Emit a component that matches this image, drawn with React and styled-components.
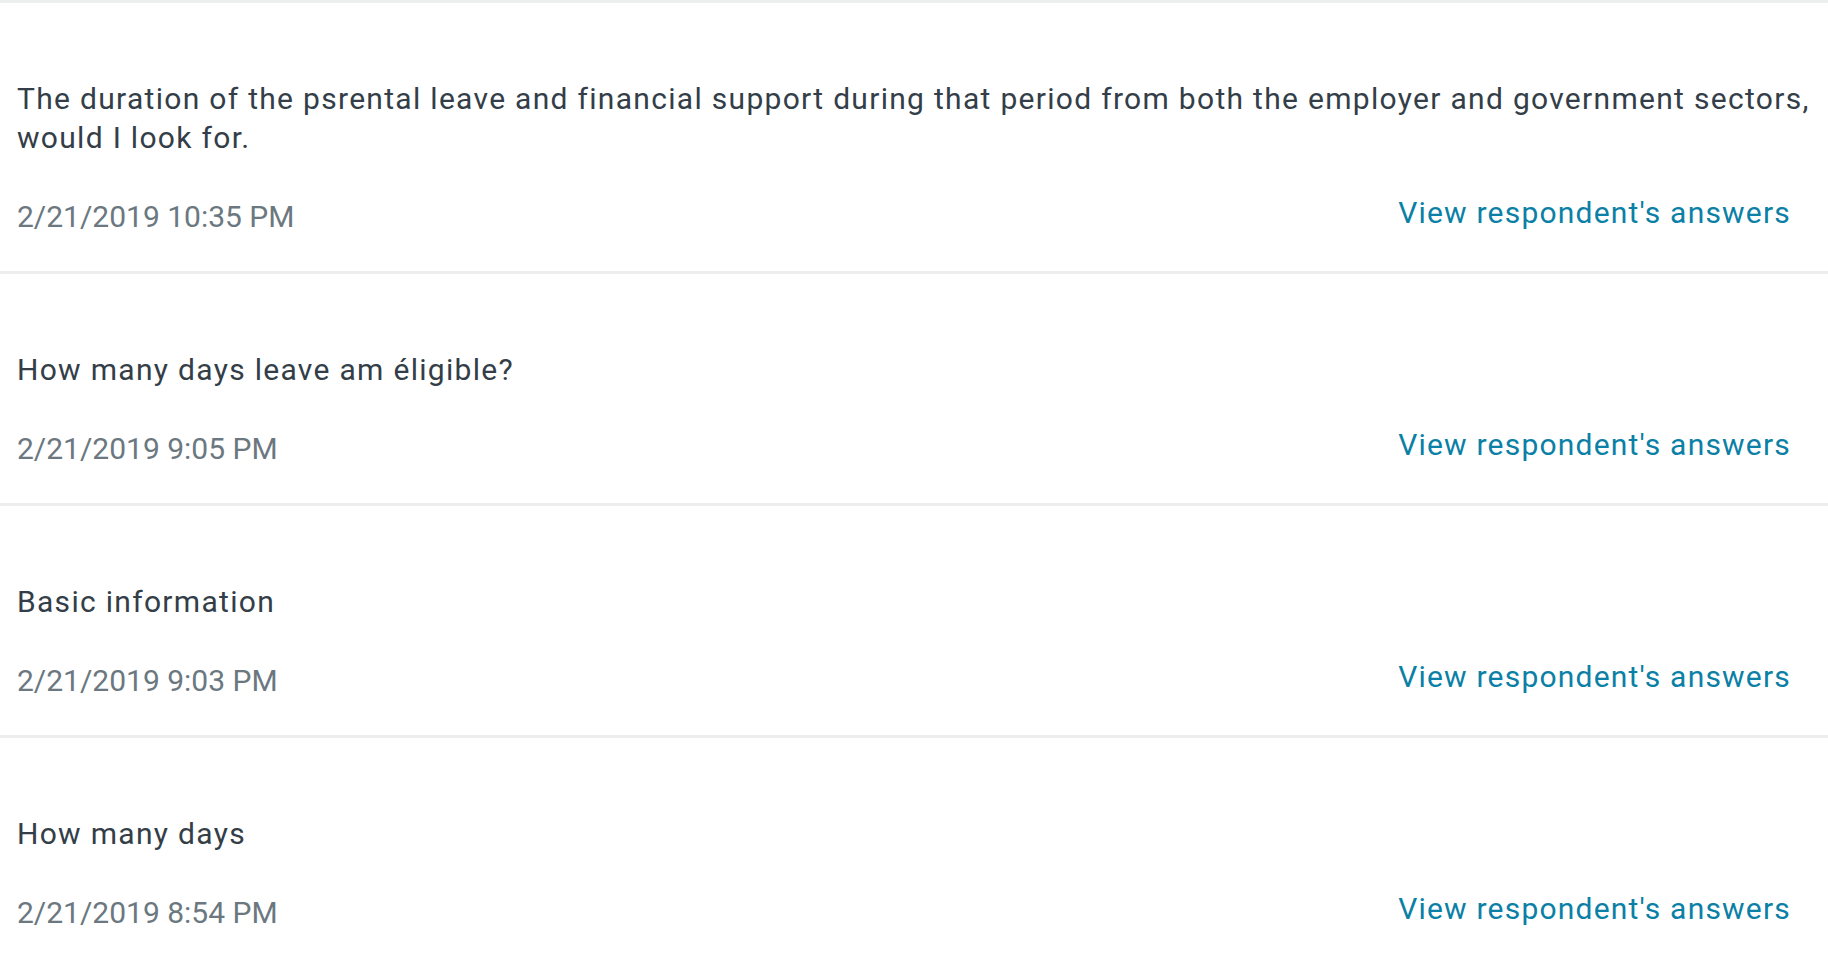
import React from "react";
import styled, { createGlobalStyle } from "styled-components";

const GlobalStyle = createGlobalStyle`
  body {
    margin: 0;
    background: #ffffff;
    font-family: Roboto, "Liberation Sans", sans-serif;
  }
`;

const List = styled.div`
  display: flex;
  flex-direction: column;
`;

const Row = styled.div`
  border-top: 3px solid #edeeee;
  padding: 76px 37px 35px 17px;
  display: flex;
  flex-direction: column;
  gap: 40px;
`;

const Answer = styled.p`
  margin: 0 -30px 0 0;
  font-size: 30px;
  line-height: 39px;
  letter-spacing: 1.3px;
  color: #333e48;
`;

const Meta = styled.div`
  display: flex;
  justify-content: space-between;
  align-items: flex-start;
`;

const Stamp = styled.span`
  font-size: 30px;
  line-height: 39px;
  color: #6b7880;
`;

const AnswersLink = styled.a`
  font-size: 30px;
  line-height: 39px;
  letter-spacing: 1.2px;
  margin-top: -4px;
  color: #0b80a6;
  text-decoration: none;
  cursor: pointer;
`;

const responses = [
  {
    text: "The duration of the psrental leave and financial support during that period from both the employer and government sectors, would I look for.",
    date: "2/21/2019 10:35 PM",
  },
  { text: "How many days leave am éligible?", date: "2/21/2019 9:05 PM" },
  { text: "Basic information", date: "2/21/2019 9:03 PM" },
  { text: "How many days", date: "2/21/2019 8:54 PM" },
];

const App = () => {
  return (
    <>
      <GlobalStyle />
      <List>
        {responses.map((r) => (
          <Row key={r.date}>
            <Answer>{r.text}</Answer>
            <Meta>
              <Stamp>{r.date}</Stamp>
              <AnswersLink>View respondent's answers</AnswersLink>
            </Meta>
          </Row>
        ))}
      </List>
    </>
  );
};

export default App;
